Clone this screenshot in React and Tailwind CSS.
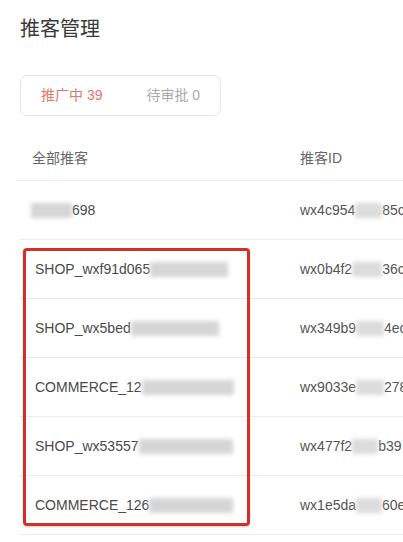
import React from "react";

const Blur = ({ w, className = "" }) => (
  <span
    className={`inline-block h-[15px] bg-[#d6d6d6] blur-[2px] align-middle ${className}`}
    style={{ width: w }}
  />
);

const rows = [
  { pre: "", blur1: 41, post: "698", pl: "pl-[11px]", id1: "wx4c954", idBlur: 27, id2: "85c" },
  { pre: "SHOP_wxf91d065", blur1: 78, post: "", pl: "pl-[15px]", id1: "wx0b4f2", idBlur: 30, id2: "36c" },
  { pre: "SHOP_wx5bed", blur1: 88, post: "", pl: "pl-[15px]", id1: "wx349b9", idBlur: 28, id2: "4ec" },
  { pre: "COMMERCE_12", blur1: 92, post: "", pl: "pl-[15px]", id1: "wx9033e", idBlur: 28, id2: "278" },
  { pre: "SHOP_wx53557", blur1: 94, post: "", pl: "pl-[15px]", id1: "wx477f2", idBlur: 26, id2: "b39" },
  { pre: "COMMERCE_126", blur1: 84, post: "", pl: "pl-[15px]", id1: "wx1e5da", idBlur: 26, id2: "60e" },
];

export default function App() {
  return (
    <div className="relative w-[403px] h-[542px] overflow-hidden bg-white font-['Liberation_Sans','Noto_Sans_CJK_SC',sans-serif]">
      <div className="px-5 pt-[15px] text-[20px] leading-[28px] text-[#3a3a3a]">推客管理</div>

      <div className="ml-5 mt-[32px] flex h-[41px] w-[201px] items-center rounded-[7px] border border-[#e6e6e6] pl-5 text-[14px]">
        <span className="text-[#e8756a]">推广中 39</span>
        <span className="ml-[44px] text-[#aaa]">待审批 0</span>
      </div>

      <div className="mt-[20px] overflow-hidden">
        <div className="ml-4 flex h-[45px] items-center border-b border-[#ebebeb] text-[14px] text-[#666]">
          <div className="w-[284px] shrink-0 pl-4">全部推客</div>
          <div className="shrink-0 whitespace-nowrap">推客ID</div>
        </div>
        {rows.map((r, i) => (
          <div
            key={i}
            className="ml-5 flex h-[59px] items-center border-b border-[#ebebeb] text-[14px] whitespace-nowrap"
          >
            <div className={`w-[280px] shrink-0 text-[#4a4a4a] ${r.pl}`}>
              {r.pre}
              <Blur w={r.blur1} />
              {r.post}
            </div>
            <div className="shrink-0 text-[#555]">
              {r.id1}
              <Blur w={r.idBlur} className="bg-[#dcdcdc]" />
              {r.id2}
            </div>
          </div>
        ))}
      </div>

      <div className="pointer-events-none absolute left-[23px] top-[248px] h-[278px] w-[227px] rounded-[4px] border-[3px] border-[#d3302a] shadow-[0_1px_2px_rgba(0,0,0,0.2)]" />
    </div>
  );
}
